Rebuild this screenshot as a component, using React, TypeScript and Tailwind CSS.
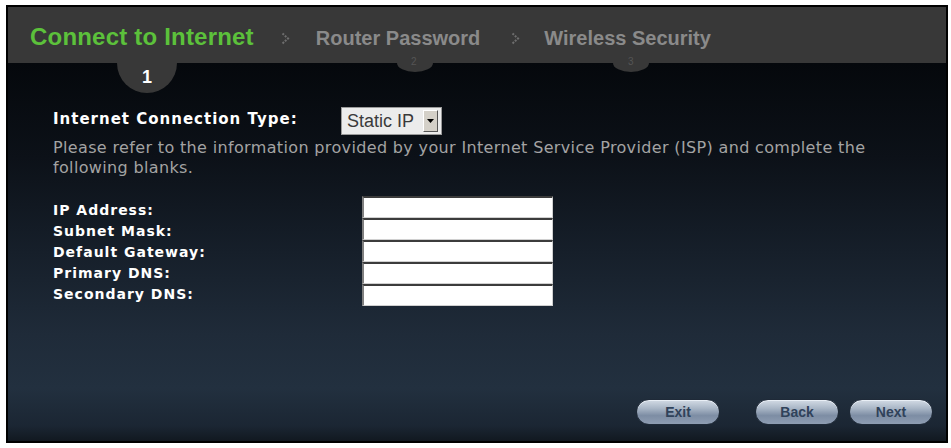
const fields = ["IP Address:", "Subnet Mask:", "Default Gateway:", "Primary DNS:", "Secondary DNS:"];

function Chevron() {
  return (
    <svg width="9" height="13" viewBox="0 0 9 13" className="shrink-0">
      <polyline
        points="1.5,1.5 7,6.5 1.5,11.5"
        fill="none"
        stroke="#6e6e6e"
        strokeWidth="2"
        strokeDasharray="2 1.2"
      />
    </svg>
  );
}

function PillButton({ label }: { label: string }) {
  return (
    <button className="flex h-[26px] w-[84px] items-center justify-center rounded-full border border-[#1f2a38] bg-[linear-gradient(to_bottom,#d3dbe5_0%,#a9b6c6_35%,#7d8da4_65%,#8e9db2_100%)] text-[14px] font-bold text-[#30425a] shadow-[inset_0_1px_0_#e8eef5] [font-family:'Liberation_Sans',Arial,sans-serif]">
      {label}
    </button>
  );
}

export default function App() {
  return (
    <div className="h-[448px] w-[951px] overflow-hidden bg-white">
      {/* cropped figure caption, only the descenders show */}
      <div className="h-[5px] overflow-hidden">
        <p className="-mt-[16px] flex pl-[6px] text-[16px] leading-[16px] font-bold text-black [font-family:'Liberation_Sans',Arial,sans-serif]">
          <span>Figure 14</span>
          <span className="ml-[217px]">Internet Connection Type</span>
        </p>
      </div>

      <div className="ml-[6px] flex h-[438px] w-[942px] flex-col border-2 border-black">
        {/* wizard steps */}
        <div className="relative flex h-[56px] shrink-0 items-baseline bg-[#383838] pt-[18px] pl-[22px] [font-family:'Liberation_Sans',Arial,sans-serif]">
          <span className="text-[24px] leading-none font-bold tracking-[0.2px] text-[#5cc13b]">
            Connect to Internet
          </span>
          <span className="ml-[27px]">
            <Chevron />
          </span>
          <span className="ml-[26px] text-[20px] leading-none font-bold text-[#8a8a8a]">Router Password</span>
          <span className="ml-[31px]">
            <Chevron />
          </span>
          <span className="ml-[24px] text-[20px] leading-none font-bold text-[#8a8a8a]">Wireless Security</span>

          <div className="absolute top-full left-[109px] flex h-[30px] w-[60px] justify-center rounded-b-full bg-[#383838] pt-[5px] text-[18px] leading-none font-bold text-white">
            1
          </div>
          <div className="absolute top-full left-[389px] h-[9px] w-[36px] rounded-br-[50%_100%] rounded-bl-[50%_100%] bg-[#383838]" />
          <span className="absolute top-[50px] left-[403px] text-[10px] leading-none text-[#555]">2</span>
          <div className="absolute top-full left-[605px] h-[9px] w-[36px] rounded-br-[50%_100%] rounded-bl-[50%_100%] bg-[#383838]" />
          <span className="absolute top-[50px] left-[620px] text-[10px] leading-none text-[#555]">3</span>
        </div>

        {/* form */}
        <div className="flex flex-1 flex-col bg-[linear-gradient(to_bottom,#05080c_0%,#0c1118_25%,#161f2a_50%,#1f2b39_72%,#22303f_86%,#1b2633_96%,#111820_100%)] pt-[44px] pl-[45px] [font-family:'DejaVu_Sans',Verdana,sans-serif]">
          <div className="flex items-start">
            <span className="w-[288px] pt-[2px] text-[15px] leading-[20px] font-bold tracking-[1px] text-white">
              Internet Connection Type:
            </span>
            <div className="flex h-[28px] w-[101px] items-center justify-between border border-[#9a9a9a] bg-[#ececec] pr-[3px] pl-[5px]">
              <span className="text-[18px] leading-none text-[#3a3a3a] [font-family:'Liberation_Sans',Arial,sans-serif]">
                Static IP
              </span>
              <span className="flex h-[22px] w-[15px] items-center justify-center border border-t-white border-r-[#555] border-b-[#555] border-l-white bg-[#d4d0c8]">
                <svg width="7" height="4" viewBox="0 0 7 4">
                  <polygon points="0,0 7,0 3.5,4" fill="#000" />
                </svg>
              </span>
            </div>
          </div>

          <p className="mt-[3px] w-[840px] text-[16px] leading-[20px] tracking-[0.35px] text-[#a3a3a3]">
            Please refer to the information provided by your Internet Service Provider (ISP) and complete the following blanks.
          </p>

          <div className="mt-[18px] flex items-start">
            <div className="flex w-[309px] flex-col pt-[4px]">
              {fields.map((f) => (
                <span key={f} className="text-[14px] leading-[21px] font-bold tracking-[1px] text-white">
                  {f}
                </span>
              ))}
            </div>
            <div className="flex w-[191px] flex-col">
              {fields.map((f) => (
                <input
                  key={f}
                  className="h-[22px] w-full border-t-2 border-r border-b border-l-2 border-t-[#3c3c3c] border-r-[#d0d0d0] border-b-[#d0d0d0] border-l-[#808080] bg-white outline-none"
                />
              ))}
            </div>
          </div>

          <div className="mt-auto flex justify-end pr-[13px] pb-[16px]">
            <PillButton label="Exit" />
            <span className="ml-[35px]">
              <PillButton label="Back" />
            </span>
            <span className="ml-[10px]">
              <PillButton label="Next" />
            </span>
          </div>
        </div>
      </div>
    </div>
  );
}
